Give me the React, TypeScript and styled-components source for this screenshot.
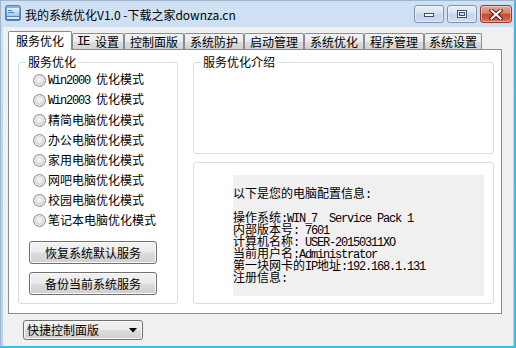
import React from 'react';
import styled, { createGlobalStyle, css } from 'styled-components';

const GlobalStyle = createGlobalStyle`
  html, body { margin: 0; padding: 0; background: #ffffff; }
  body {
    font-family: "Noto Sans CJK SC", "Noto Sans", sans-serif;
    font-size: 12px;
    color: #000;
  }
  * { box-sizing: border-box; }
`;

const Window = styled.div`
  width: 516px;
  height: 348px;
  display: flex;
  flex-direction: column;
  background: linear-gradient(180deg, #d0e1f4 0%, #c3d8ee 35%, #b9d0ea 100%);
  border-top: 1px solid #9fb5d0;
  border-left: 1px solid #9fb5d0;
  border-right: 2px solid #2fbfec;
  border-bottom: 2px solid #2fbfec;
`;

const TitleBar = styled.div`
  height: 26px;
  flex: none;
  display: flex;
  align-items: flex-start;
  padding: 4px 2px 0 4px;
`;

const TitleText = styled.span`
  margin: 2px 0 0 4px;
  line-height: 16px;
  font-size: 12px;
  color: #000;
  white-space: nowrap;
`;

const Controls = styled.div`
  margin-left: auto;
  display: flex;
  gap: 3px;
`;

const CtrlBtn = styled.div<{ $close?: boolean; $w: number }>`
  width: ${(p) => p.$w}px;
  height: 18px;
  border-radius: 3px;
  display: flex;
  align-items: center;
  justify-content: center;
  box-shadow: inset 0 0 0 1px rgba(255, 255, 255, 0.45);
  ${(p) =>
    p.$close
      ? css`
          border: 1px solid #8c3b31;
          background: linear-gradient(180deg, #e9a796 0%, #da7f6c 45%, #c7452f 52%, #d0715b 100%);
        `
      : css`
          border: 1px solid #7d93b2;
          background: linear-gradient(180deg, #e9f0f8 0%, #d6e3f2 45%, #c3d5eb 52%, #cfdef0 100%);
        `}
`;

const Client = styled.div`
  flex: 1;
  margin: 0 1px 0 2px;
  background: #f0f0f0;
  padding: 4px 0 0 5px;
  display: flex;
  flex-direction: column;
  align-items: flex-start;
`;

const TabStrip = styled.div`
  height: 18px;
  display: flex;
  align-items: flex-end;
  position: relative;
  z-index: 1;
`;

const Tab = styled.div<{ $active?: boolean; $w: number }>`
  width: ${(p) => p.$w}px;
  border: 1px solid #898c95;
  border-bottom: none;
  display: flex;
  align-items: center;
  justify-content: center;
  line-height: 14px;
  white-space: pre;
  border-radius: 2px 2px 0 0;
  ${(p) =>
    p.$active
      ? css`
          height: 19px;
          margin-bottom: -1px;
          background: #ffffff;
        `
      : css`
          height: 16px;
          background: linear-gradient(180deg, #f3f3f3 0%, #ebebeb 50%, #dedede 50%, #d3d3d3 100%);
        `}
`;

const Panel = styled.div`
  width: 494px;
  height: 265px;
  border: 1px solid #898c95;
  background: #ffffff;
  padding: 12px 7px 9px 9px;
  display: flex;
  gap: 15px;
`;

const Group = styled.div<{ $w?: number; $h: number }>`
  position: relative;
  width: ${(p) => (p.$w ? `${p.$w}px` : 'auto')};
  height: ${(p) => p.$h}px;
  border: 1px solid #d5dfe5;
  border-radius: 3px;
  display: flex;
  flex-direction: column;
  align-items: flex-start;
`;

const Legend = styled.span`
  position: absolute;
  top: -8px;
  left: 7px;
  padding: 0 2px;
  background: #ffffff;
  line-height: 14px;
  white-space: nowrap;
`;

const LeftGroup = styled(Group)`
  padding: 7px 0 0 10px;
`;

const RadioList = styled.div`
  margin-left: 4px;
  display: flex;
  flex-direction: column;
`;

const RadioRow = styled.label`
  height: 20px;
  display: flex;
  align-items: center;
  gap: 2px;
  white-space: pre;
  line-height: 14px;
`;

const RadioDot = styled.span`
  width: 13px;
  height: 13px;
  flex: none;
  border-radius: 50%;
  border: 1px solid #8b8b8b;
  background: radial-gradient(circle at 50% 45%, #f7f7f7 0, #ececec 2.5px, #c6c6c6 5.5px);
  box-shadow: inset 0 0 0 1px #f2f2f2;
`;

const Button = styled.div<{ $mt: number }>`
  margin-top: ${(p) => p.$mt}px;
  width: 128px;
  height: 23px;
  border: 1px solid #707070;
  border-radius: 3px;
  background: linear-gradient(180deg, #f2f2f2 0%, #ebebeb 48%, #dddddd 52%, #cfcfcf 100%);
  box-shadow: inset 0 0 0 1px #fbfbfb;
  display: flex;
  align-items: center;
  justify-content: center;
  line-height: 14px;
`;

const RightCol = styled.div`
  width: 301px;
  display: flex;
  flex-direction: column;
  gap: 8px;
`;

const InfoGroup = styled(Group)`
  padding: 12px 9px 7px 39px;
  align-items: stretch;
`;

const InfoBox = styled.div`
  flex: 1;
  background: #f0f0f0;
  padding-top: 12px;
`;

const InfoLine = styled.div`
  height: 12px;
  line-height: 12px;
  white-space: pre;
`;

const Combo = styled.div`
  margin: 6px 0 0 15px;
  width: 120px;
  height: 20px;
  border: 1px solid #707070;
  border-radius: 3px;
  background: linear-gradient(180deg, #f2f2f2 0%, #ebebeb 48%, #dddddd 52%, #cfcfcf 100%);
  box-shadow: inset 0 0 0 1px #fbfbfb;
  display: flex;
  align-items: center;
  padding: 0 5px 0 3px;
  line-height: 14px;
`;

const ComboArrow = styled.svg`
  margin-left: auto;
  flex: none;
`;

const Mono = styled.span`
  font-family: "Liberation Mono", "DejaVu Sans Mono", monospace;
  font-size: 12px;
  letter-spacing: -1.2px;
`;

function Mixed({ text }: { text: string }) {
  const parts = text.split(/([\x20-\x7e]+)/).filter((s) => s.length > 0);
  return (
    <>
      {parts.map((p, i) =>
        /^[\x20-\x7e]+$/.test(p) ? <Mono key={i}>{p}</Mono> : <React.Fragment key={i}>{p}</React.Fragment>
      )}
    </>
  );
}

function AppIcon() {
  return (
    <svg width="16" height="16" viewBox="0 0 16 16">
      <defs>
        <linearGradient id="ig" x1="0" y1="0" x2="0" y2="1">
          <stop offset="0" stopColor="#8fb8e6" />
          <stop offset="1" stopColor="#3f73b8" />
        </linearGradient>
        <linearGradient id="ig2" x1="0" y1="0" x2="0" y2="1">
          <stop offset="0" stopColor="#e8f3ff" />
          <stop offset="1" stopColor="#9fc4ec" />
        </linearGradient>
      </defs>
      <rect x="0.5" y="0.5" width="15" height="15" rx="2" fill="url(#ig)" stroke="#5a7fae" />
      <rect x="2" y="3" width="12" height="8" fill="url(#ig2)" />
      <rect x="3" y="5" width="4" height="1" fill="#4a86c8" />
      <rect x="3" y="7" width="6" height="1" fill="#4a86c8" />
      <rect x="2" y="12" width="12" height="2" fill="#dbe8f6" />
    </svg>
  );
}

function MinIcon() {
  return (
    <svg width="12" height="8" viewBox="0 0 12 8">
      <rect x="1.5" y="3.5" width="9" height="3" fill="#ffffff" stroke="#3d4f66" />
    </svg>
  );
}

function MaxIcon() {
  return (
    <svg width="12" height="10" viewBox="0 0 12 10">
      <rect x="1.5" y="1.5" width="9" height="7" fill="none" stroke="#3d4f66" />
      <rect x="2.5" y="2.5" width="7" height="5" fill="none" stroke="#ffffff" />
      <rect x="3.5" y="3.5" width="5" height="3" fill="none" stroke="#3d4f66" />
    </svg>
  );
}

function CloseIcon() {
  return (
    <svg width="14" height="11" viewBox="0 0 14 11">
      <path d="M2.5 1.5 L11.5 9.5 M11.5 1.5 L2.5 9.5" stroke="#4a1d17" strokeWidth="4" strokeLinecap="square" />
      <path d="M2.5 1.5 L11.5 9.5 M11.5 1.5 L2.5 9.5" stroke="#ffffff" strokeWidth="2" strokeLinecap="square" />
    </svg>
  );
}

const tabs: { label: string; w: number }[] = [
  { label: '服务优化', w: 64 },
  { label: 'IE 设置', w: 52 },
  { label: '控制面版', w: 60 },
  { label: '系统防护', w: 60 },
  { label: '启动管理', w: 60 },
  { label: '系统优化', w: 60 },
  { label: '程序管理', w: 60 },
  { label: '系统设置', w: 58 },
];

const modes = [
  'Win2000 优化模式',
  'Win2003 优化模式',
  '精简电脑优化模式',
  '办公电脑优化模式',
  '家用电脑优化模式',
  '网吧电脑优化模式',
  '校园电脑优化模式',
  '笔记本电脑优化模式',
];

const infoLines = [
  '以下是您的电脑配置信息:',
  '',
  '操作系统:WIN_7  Service Pack 1',
  '内部版本号: 7601',
  '计算机名称: USER-20150311XO',
  '当前用户名:Administrator',
  '第一块网卡的IP地址:192.168.1.131',
  '注册信息:',
];

export default function App() {
  return (
    <>
      <GlobalStyle />
      <Window>
        <TitleBar>
          <AppIcon />
          <TitleText>我的系统优化V1.0 -下载之家downza.cn</TitleText>
          <Controls>
            <CtrlBtn $w={30}>
              <MinIcon />
            </CtrlBtn>
            <CtrlBtn $w={30}>
              <MaxIcon />
            </CtrlBtn>
            <CtrlBtn $w={32} $close>
              <CloseIcon />
            </CtrlBtn>
          </Controls>
        </TitleBar>
        <Client>
          <TabStrip>
            {tabs.map((t, i) => (
              <Tab key={t.label} $w={t.w} $active={i === 0}>
                <Mixed text={t.label} />
              </Tab>
            ))}
          </TabStrip>
          <Panel>
            <LeftGroup $w={160} $h={242}>
              <Legend>服务优化</Legend>
              <RadioList>
                {modes.map((m) => (
                  <RadioRow key={m}>
                    <RadioDot />
                    <span>
                      <Mixed text={m} />
                    </span>
                  </RadioRow>
                ))}
              </RadioList>
              <Button $mt={11}>恢复系统默认服务</Button>
              <Button $mt={8}>备份当前系统服务</Button>
            </LeftGroup>
            <RightCol>
              <Group $h={92}>
                <Legend>服务优化介绍</Legend>
              </Group>
              <InfoGroup $h={142}>
                <InfoBox>
                  {infoLines.map((l, i) => (
                    <InfoLine key={i}>
                      <Mixed text={l} />
                    </InfoLine>
                  ))}
                </InfoBox>
              </InfoGroup>
            </RightCol>
          </Panel>
          <Combo>
            <span>快捷控制面版</span>
            <ComboArrow width="8" height="5" viewBox="0 0 8 5">
              <path d="M0 0 H8 L4 4.5 Z" fill="#000" />
            </ComboArrow>
          </Combo>
        </Client>
      </Window>
    </>
  );
}
